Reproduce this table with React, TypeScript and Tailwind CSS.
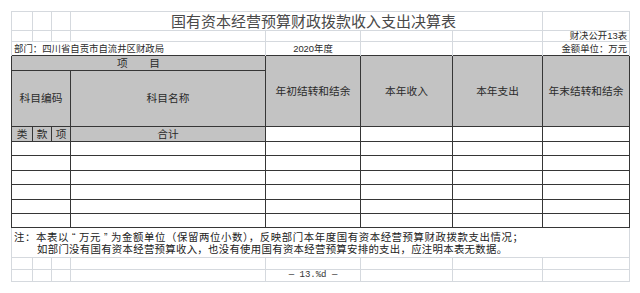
import React from 'react';

const cols = [21, 19, 19, 195, 95, 92, 90, 87];

// light spreadsheet grid cell and dark table cell
const g = 'border-t border-l border-[#d5d9de] p-0';
const gr = 'border-t border-l border-r border-[#d5d9de] p-0';
const d = 'border border-[#363636] p-0';
const hd = 'border border-[#363636] p-0 bg-[#c3c3c3] text-center';

const App: React.FC = () => {
  const dataRows = [14, 15, 14, 15, 14, 14];

  return (
    <div className="w-[640px] h-[293px] bg-white pt-[11px] pl-[11px] text-[#2a2a2a] font-['Liberation_Sans','Noto_Sans_CJK_SC',sans-serif]">
      <table className="table-fixed border-collapse w-[618px] leading-none">
        <colgroup>
          {cols.map((w, i) => (
            <col key={i} style={{ width: w }} />
          ))}
        </colgroup>
        <tbody>
          {/* Title */}
          <tr className="h-[19px]">
            <td className={g}></td>
            <td className={g}></td>
            <td className={g}></td>
            <td colSpan={4} className={`${g} text-center text-[15px] text-[#4a4a4a] pl-[14px]`}>
              国有资本经营预算财政拨款收入支出决算表
            </td>
            <td className={gr}></td>
          </tr>

          <tr className="h-[11px]">
            <td className={g}></td>
            <td className={g}></td>
            <td className={g}></td>
            <td className={g}></td>
            <td className={g}></td>
            <td className={g}></td>
            <td className={g}></td>
            <td className={`${gr} text-right text-[9.4px] pr-[2px]`}>财决公开13表</td>
          </tr>

          <tr className="h-[14px]">
            <td colSpan={4} className={`${g} text-left text-[9.4px] pl-[2px] whitespace-nowrap`}>
              部门：四川省自贡市自流井区财政局
            </td>
            <td className={`${g} text-center text-[9.4px]`}>2020年度</td>
            <td className={g}></td>
            <td className={g}></td>
            <td className={`${gr} text-right text-[9.4px] pr-[2px]`}>金额单位：万元</td>
          </tr>

          {/* Table header */}
          <tr className="h-[15px] text-[10.7px]">
            <td colSpan={4} className={hd}>项　　目</td>
            <td rowSpan={2} className={hd}>年初结转和结余</td>
            <td rowSpan={2} className={hd}>本年收入</td>
            <td rowSpan={2} className={hd}>本年支出</td>
            <td rowSpan={2} className={hd}>年末结转和结余</td>
          </tr>
          <tr className="h-[56px] text-[10.7px]">
            <td colSpan={3} className={hd}>科目编码</td>
            <td className={hd}>科目名称</td>
          </tr>
          <tr className="h-[15px] text-[10.7px]">
            <td className={hd}>类</td>
            <td className={hd}>款</td>
            <td className={hd}>项</td>
            <td className={hd}>合计</td>
            <td className={d}></td>
            <td className={d}></td>
            <td className={d}></td>
            <td className={d}></td>
          </tr>

          {dataRows.map((h, i) => (
            <tr key={i} style={{ height: h }}>
              <td colSpan={3} className={d}></td>
              <td className={d}></td>
              <td className={d}></td>
              <td className={d}></td>
              <td className={d}></td>
              <td className={d}></td>
            </tr>
          ))}

          {/* Notes */}
          <tr className="h-[30px]">
            <td colSpan={8} className={`${gr} text-[10.4px] leading-[12px] text-[#222] align-top pt-[4px] pl-[2px]`}>
              <div className="whitespace-nowrap tracking-[0.6px]">
                注：本表以<span className="mx-[3px]">“</span>万元<span className="mx-[3px]">”</span>为金额单位（保留两位小数），反映部门本年度国有资本经营预算财政拨款支出情况；
              </div>
              <div className="whitespace-nowrap pl-[23px] tracking-[0.3px]">
                如部门没有国有资本经营预算收入，也没有使用国有资本经营预算安排的支出，应注明本表无数据。
              </div>
            </td>
          </tr>

          <tr className="h-[12px]">
            <td className={g}></td>
            <td className={g}></td>
            <td className={g}></td>
            <td className={g}></td>
            <td className={g}></td>
            <td className={g}></td>
            <td className={g}></td>
            <td className={gr}></td>
          </tr>
          <tr className="h-[12px]">
            <td className={`${g} border-b`}></td>
            <td className={`${g} border-b`}></td>
            <td className={`${g} border-b`}></td>
            <td className={`${g} border-b`}></td>
            <td className={`${g} border-b text-center text-[9px] text-[#333] font-['Liberation_Mono',monospace]`}>
              — 13.%d —
            </td>
            <td className={`${g} border-b`}></td>
            <td className={`${g} border-b`}></td>
            <td className={`${gr} border-b`}></td>
          </tr>
        </tbody>
      </table>
    </div>
  );
};

export default App;
